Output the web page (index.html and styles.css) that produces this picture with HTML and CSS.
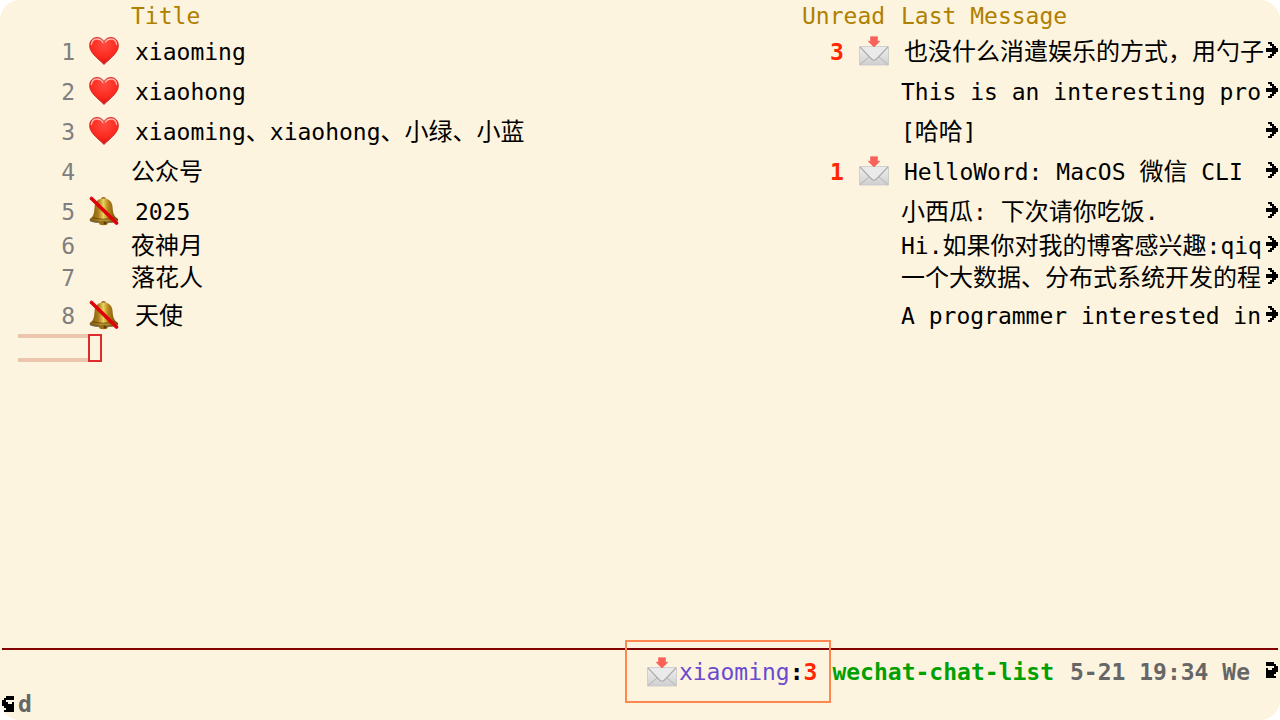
FILE: index.html
```html
<!DOCTYPE html>
<html lang="zh-CN">
<head>
<meta charset="utf-8">
<title>wechat-chat-list</title>
<link rel="stylesheet" href="styles.css">
</head>
<body>
<svg class="defs" width="0" height="0" aria-hidden="true">
  <defs>
    <radialGradient id="heartFill" cx=".5" cy=".25" r=".8">
      <stop offset="0" stop-color="#ff4a40"/><stop offset=".6" stop-color="#fb2a1e"/><stop offset="1" stop-color="#c90f12"/>
    </radialGradient>
    <linearGradient id="bellFill" x1="0" x2="1" y1="0" y2="0">
      <stop offset="0" stop-color="#7d560e"/><stop offset=".3" stop-color="#a87c18"/><stop offset=".48" stop-color="#ecd060"/><stop offset=".65" stop-color="#b3851a"/><stop offset="1" stop-color="#684209"/>
    </linearGradient>
    <linearGradient id="paper" x1="0" x2="0" y1="0" y2="1">
      <stop offset="0" stop-color="#f0f0f0"/><stop offset="1" stop-color="#cfcfcf"/>
    </linearGradient>
  </defs>
  <symbol id="heart" viewBox="0 0 30 30">
    <path d="M15 28.600C13.500 26.500 9 23.500 5 19 1.800 15.500.6 12.500.6 9.500.6 5 3.700 1.400 8 1.400c3.200 0 5.700 1.600 7 4.300 1.300-2.700 3.800-4.300 7-4.300 4.300 0 7.400 3.600 7.400 8.100 0 3-1.200 6-4.400 9.500-4 4.500-8.500 7.500-10 9.600z" fill="url(#heartFill)" stroke="#c91a1a" stroke-width=".7"/>
    <path d="M2.400 8.500C2.800 5 5 3 8 3c2.800 0 4.800 1.200 6 3.700M16.400 6C17.700 4 19.600 3 22 3c3 0 5.200 2 5.600 5.500" fill="none" stroke="#ffb5ab" stroke-width="1.300" stroke-linecap="round"/>
  </symbol>
  <symbol id="muted" viewBox="0 0 30 30">
    <ellipse cx="14.500" cy="2.800" rx="2.400" ry="1.900" fill="#8c681c"/>
    <path d="M14.500 2.500c5.500 0 8.500 3 9 8 .3 4 .5 8 3 10.500 1.400 1.300 2.700 1.700 2.700 2.800 0 1.700-5 3.200-14.500 3.200S.7 26 .7 23.800c0-1.100 1.300-1.500 2.500-2.800 2-2.500 2.100-6.500 2.400-10.500.5-5 3.400-8 8.900-8z" fill="url(#bellFill)"/>
    <path d="M3.500 21.500c6 2.300 16 2.300 22.500 0" fill="none" stroke="#6f4b0c" stroke-width="1"/>
    <path d="M1 24.300c6 2.500 22 2.500 28 0" fill="none" stroke="#77633a" stroke-width="1.500"/>
    <ellipse cx="14.500" cy="26.800" rx="4.600" ry="2.500" fill="#99701c"/>
    <circle cx="16" cy="27" r="1.500" fill="#5b3c10"/>
    <path d="M2.500 2.500 27.500 27" stroke="#e00008" stroke-width="3.600" stroke-linecap="round"/>
  </symbol>
  <symbol id="mail" viewBox="0 0 30 30">
    <path d="M.5 10.500h29V29H.5z" fill="url(#paper)" stroke="#c8c8c8" stroke-width=".8"/>
    <path d="M1 28.600 11.800 19.500M29 28.600 18.200 19.500" stroke="#b4b4b4" stroke-width="1"/>
    <path d="M1 11 12.500 23c1.600 1.700 3.400 1.700 5 0L29 11z" fill="#eaeaea"/>
    <path d="M1 11 12.500 23c1.600 1.700 3.400 1.700 5 0L29 11" fill="none" stroke="#acacac" stroke-width="1.100"/>
    <path d="M11.500.7h7v4.500H21L15 11 9 5.200h2.500z" fill="#f8605a" stroke="#f8605a" stroke-width=".6" stroke-linejoin="round"/>
  </symbol>
  <symbol id="truncated" viewBox="0 0 6 8">
    <path d="M1 0h2v1h1v1h1v1h1v2H5v1H4v1H3v1H1V7h1V6h1V5H0V3h3V2H2V1H1z"/>
  </symbol>
  <symbol id="curl" viewBox="0 0 6 8">
    <path d="M0 0h4v1h1v1h1v3H5v1H4v1h1v1H0V3h1v1h2V3h1V2H0z"/>
  </symbol>
</svg>

<div class="window">
  <main class="buffer">
    <table class="chats">
      <colgroup>
        <col class="col-index"><col class="col-title"><col class="col-unread"><col class="col-message"><col class="col-fringe">
      </colgroup>
      <thead>
        <tr>
          <td></td>
          <th scope="col" class="title">Title</th>
          <th scope="col">Unread</th>
          <th scope="col">Last Message</th>
          <td></td>
        </tr>
      </thead>
      <tbody>
        <tr>
          <td class="index">1</td>
          <td><div class="cell"><svg class="icon"><use href="#heart"/></svg><span>xiaoming</span></div></td>
          <td><div class="unread">3<svg class="icon"><use href="#mail"/></svg></div></td>
          <td><div class="message shifted"><span class="cjk">也没什么消遣娱乐的方式，用勺子</span></div></td>
          <td class="fringe"><svg class="bitmap"><use href="#truncated"/></svg></td>
        </tr>
        <tr>
          <td class="index">2</td>
          <td><div class="cell"><svg class="icon"><use href="#heart"/></svg><span>xiaohong</span></div></td>
          <td></td>
          <td><div class="message">This is an interesting pro</div></td>
          <td class="fringe"><svg class="bitmap"><use href="#truncated"/></svg></td>
        </tr>
        <tr>
          <td class="index">3</td>
          <td><div class="cell"><svg class="icon"><use href="#heart"/></svg><span>xiaoming<span class="cjk">、</span>xiaohong<span class="cjk">、小绿、小蓝</span></span></div></td>
          <td></td>
          <td><div class="message">[<span class="cjk">哈哈</span>]</div></td>
          <td class="fringe"><svg class="bitmap"><use href="#truncated"/></svg></td>
        </tr>
        <tr>
          <td class="index">4</td>
          <td class="title"><span class="cjk">公众号</span></td>
          <td><div class="unread">1<svg class="icon"><use href="#mail"/></svg></div></td>
          <td><div class="message shifted">HelloWord: MacOS <span class="cjk">微信</span> CLI</div></td>
          <td class="fringe"><svg class="bitmap"><use href="#truncated"/></svg></td>
        </tr>
        <tr>
          <td class="index">5</td>
          <td><div class="cell"><svg class="icon"><use href="#muted"/></svg><span>2025</span></div></td>
          <td></td>
          <td><div class="message"><span class="cjk">小西瓜</span>: <span class="cjk">下次请你吃饭</span>.</div></td>
          <td class="fringe"><svg class="bitmap"><use href="#truncated"/></svg></td>
        </tr>
        <tr class="short">
          <td class="index">6</td>
          <td class="title"><span class="cjk">夜神月</span></td>
          <td></td>
          <td><div class="message">Hi.<span class="cjk">如果你对我的博客感兴趣</span>:qiq</div></td>
          <td class="fringe"><svg class="bitmap"><use href="#truncated"/></svg></td>
        </tr>
        <tr class="short">
          <td class="index">7</td>
          <td class="title"><span class="cjk">落花人</span></td>
          <td></td>
          <td><div class="message"><span class="cjk">一个大数据、分布式系统开发的程</span></div></td>
          <td class="fringe"><svg class="bitmap"><use href="#truncated"/></svg></td>
        </tr>
        <tr>
          <td class="index">8</td>
          <td><div class="cell"><svg class="icon"><use href="#muted"/></svg><span class="cjk">天使</span></div></td>
          <td></td>
          <td><div class="message">A programmer interested in</div></td>
          <td class="fringe"><svg class="bitmap"><use href="#truncated"/></svg></td>
        </tr>
      </tbody>
    </table>
    <div class="current-line"><span class="line-mark"></span><span class="cursor"></span></div>
  </main>
  <footer>
    <div class="mode-line">
      <div class="notice"><svg class="icon"><use href="#mail"/></svg><span class="sender">xiaoming</span><b>:</b><b class="count">3</b></div>
      <b class="mode">wechat-chat-list</b>
      <b class="clock">5-21 19:34 We</b>
      <svg class="bitmap"><use href="#curl"/></svg>
    </div>
    <div class="echo"><svg class="bitmap flipped"><use href="#curl"/></svg><b>d</b></div>
  </footer>
</div>
</body>
</html>
```
FILE: styles.css
```css
* { box-sizing: border-box; }
body {
  margin: 0;
  background: #fff;
  color: #000;
  font-family: "DejaVu Sans Mono", "Noto Sans CJK SC", monospace;
  font-size: 23px;
  line-height: 40px;
}
.defs { position: absolute; }
svg { display: block; flex: none; }
.window {
  display: flex;
  flex-direction: column;
  min-height: 100vh;
  background: #fdf4df;
  border-radius: 20px;
}
.buffer { flex: 1; }
.cjk {
  font-family: "Noto Sans CJK SC", sans-serif;
  font-size: 24px;
  line-height: 20px;
}
.icon { width: 30px; height: 30px; }
.bitmap { width: 12px; height: 16px; shape-rendering: crispEdges; }

.chats {
  width: 100%;
  table-layout: fixed;
  border-collapse: collapse;
}
.col-index { width: 89px; }
.col-unread { width: 99px; }
.col-message { width: 363px; }
.col-fringe { width: 16px; }
.chats td, .chats th {
  padding: 0;
  vertical-align: top;
  white-space: pre;
}
.chats th {
  height: 32px;
  line-height: 32px;
  color: #b08000;
  font-weight: normal;
  text-align: left;
}
.chats .title { padding-left: 42px; }
.chats .index {
  padding-right: 14px;
  color: #7f7f7f;
  text-align: right;
}
.cell {
  display: flex;
  height: 40px;
  gap: 16px;
}
.cell .icon { margin-top: 4px; }
.cell > .cjk { line-height: 36px; }
.unread {
  display: flex;
  gap: 15px;
  padding-left: 28px;
  color: #ff2600;
  font-weight: bold;
}
.unread .icon { margin-top: 4px; }
.message { overflow: hidden; }
.shifted { padding-left: 3px; }
.chats .fringe { padding: 10px 0 0 2px; }
.short { height: 32px; line-height: 28px; }
.chats .short .message { height: 32px; }
.chats .short .fringe { padding-top: 4px; }

.current-line {
  display: flex;
  height: 28px;
  margin: -2px 0 0 18px;
}
.line-mark {
  width: 70px;
  border: solid #ebc5ad;
  border-width: 4px 0;
}
.cursor { width: 14px; border: 2px solid #dc2c2c; }

.mode-line {
  display: flex;
  align-items: center;
  justify-content: flex-end;
  height: 46px;
  margin: 0 2px;
  border-top: 2px solid #800000;
}
.notice {
  position: relative;
  display: flex;
  align-items: center;
  height: 44px;
  padding: 0 14px 0 22px;
}
.notice::after {
  content: "";
  position: absolute;
  inset: -10px 0 -9px 0;
  border: 2px solid #ff8850;
}
.sender { padding-left: 2px; color: #6a4bd0; }
.count { color: #ff2600; }
.mode { margin: 0 16px 0 1px; color: #00a000; }
.clock { margin-right: 16px; color: #666; }
.mode-line .bitmap { margin-bottom: 4px; }
.echo {
  display: flex;
  align-items: center;
  gap: 4px;
  height: 26px;
  padding: 0 0 6px 2px;
  color: #666;
  line-height: 20px;
}
.flipped { transform: scaleX(-1); }
```
